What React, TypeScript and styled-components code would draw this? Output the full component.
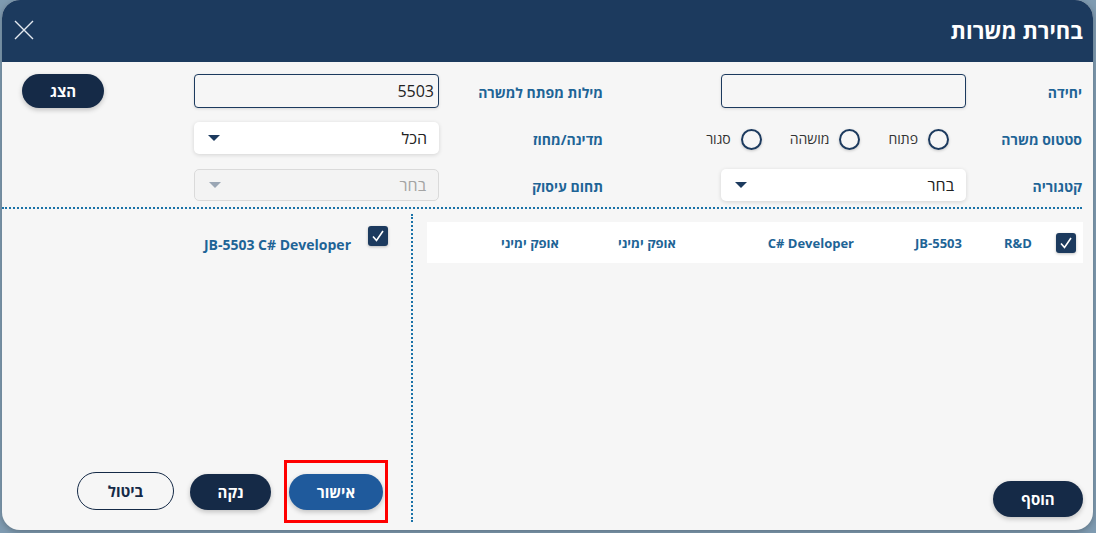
import React, { useState } from 'react'
import styled, { createGlobalStyle } from 'styled-components'

const GlobalStyle = createGlobalStyle`
  html, body {
    margin: 0;
    padding: 0;
    background: #7f9bb1;
    font-family: 'Open Sans', 'Liberation Sans', 'DejaVu Sans', sans-serif;
  }
  * {
    box-sizing: border-box;
  }
`

const Page = styled.div`
  width: 1096px;
  height: 533px;
  padding: 0 3px 3px 2px;
`

const Dialog = styled.div`
  direction: rtl;
  height: 530px;
  background: #f6f6f6;
  border-radius: 18px;
  overflow: hidden;
  display: flex;
  flex-direction: column;
  box-shadow: 0 2px 6px rgba(0, 0, 0, 0.25);
`

const Header = styled.div`
  height: 62px;
  flex-shrink: 0;
  background: #1c3a5e;
  display: flex;
  align-items: center;
  justify-content: space-between;
  padding: 0 10px 2px 10px;
`

const Title = styled.h1`
  margin: 0;
  color: #ffffff;
  font-size: 22px;
  font-weight: 700;
`

const CloseButton = styled.button`
  border: none;
  background: transparent;
  padding: 0;
  width: 24px;
  height: 24px;
  cursor: pointer;
  display: flex;
  align-items: center;
  justify-content: center;
`

const FilterGrid = styled.div`
  display: grid;
  grid-template-columns: 116px 245px 118px 164px 245px 90px 82px;
  grid-auto-rows: 34px;
  row-gap: 13px;
  align-items: center;
  padding: 12px 0 5px 20px;
  margin-right: 11px;
  border-bottom: 2px dotted #1a72a8;
`

const Label = styled.label`
  color: #1e6496;
  font-size: 14px;
  font-weight: 700;
  white-space: nowrap;
  padding-top: 2px;
`

const TextInput = styled.input`
  width: 100%;
  height: 34px;
  border: 1px solid #1c3a5e;
  border-radius: 4px;
  background: #f6f6f6;
  font-family: inherit;
  font-size: 16px;
  color: #222;
  padding: 0 4px;
  direction: rtl;
  outline: none;
  box-shadow: 0 1px 3px rgba(0, 0, 0, 0.12);
`

const SelectBox = styled.div<{ disabled?: boolean }>`
  height: 32px;
  border-radius: 5px;
  background: ${({ disabled }) => (disabled ? '#f3f3f3' : '#ffffff')};
  border: ${({ disabled }) => (disabled ? '1px solid #dadada' : 'none')};
  box-shadow: ${({ disabled }) =>
    disabled ? 'none' : '0 1px 4px rgba(0, 0, 0, 0.14)'};
  display: flex;
  align-items: center;
  justify-content: space-between;
  padding: 0 12px 0 14px;
  font-size: 16px;
  color: ${({ disabled }) => (disabled ? '#a4a4a4' : '#222')};
`

const Arrow = styled.span<{ disabled?: boolean }>`
  width: 0;
  height: 0;
  border-left: 6px solid transparent;
  border-right: 6px solid transparent;
  border-top: 6px solid ${({ disabled }) => (disabled ? '#9aa6b4' : '#1c3a5e')};
`

const RadioGroup = styled.div`
  grid-column: span 2;
  display: flex;
  align-items: center;
  gap: 28px;
  padding-right: 17px;
`

const RadioItem = styled.label`
  display: flex;
  align-items: center;
  gap: 10px;
  font-size: 14px;
  color: #333;
  cursor: pointer;
`

const RadioCircle = styled.span`
  width: 21px;
  height: 21px;
  border-radius: 50%;
  border: 2px solid #1c3a5e;
  box-shadow: 0 1px 3px rgba(0, 0, 0, 0.2);
  margin-top: 3px;
`

const PillButton = styled.button<{ variant?: 'dark' | 'blue' | 'outline' }>`
  height: 36px;
  border-radius: 20px;
  font-family: inherit;
  font-size: 15px;
  font-weight: 700;
  cursor: pointer;
  background: ${({ variant }) =>
    variant === 'blue'
      ? '#1f5a9c'
      : variant === 'outline'
        ? 'transparent'
        : '#152a47'};
  color: ${({ variant }) => (variant === 'outline' ? '#152a47' : '#ffffff')};
  border: ${({ variant }) =>
    variant === 'outline' ? '1px solid #152a47' : 'none'};
  box-shadow: ${({ variant }) =>
    variant === 'outline' ? 'none' : '0 2px 5px rgba(0, 0, 0, 0.22)'};
`

const ShowButton = styled(PillButton)`
  height: 34px;
  width: 82px;
`

const Lower = styled.div`
  flex: 1;
  display: flex;
  min-height: 0;
`

const ResultsPanel = styled.div`
  width: 680px;
  display: flex;
  flex-direction: column;
  padding: 13px 10px 13px 14px;
`

const ResultRow = styled.div`
  height: 41px;
  background: #ffffff;
  display: flex;
  align-items: center;
  padding-right: 7px;
`

const Cell = styled.span<{ width: number }>`
  width: ${({ width }) => width}px;
  flex-shrink: 0;
  color: #1e6496;
  font-size: 13px;
  font-weight: 700;
  white-space: nowrap;
`

const CheckBox = styled.span`
  width: 20px;
  height: 20px;
  border-radius: 3px;
  background: #1c3a5e;
  flex-shrink: 0;
  display: flex;
  align-items: center;
  justify-content: center;
  box-shadow: 0 1px 3px rgba(0, 0, 0, 0.25);
`

const Spacer = styled.div`
  flex: 1;
`

const AddButton = styled(PillButton)`
  width: 90px;
  align-self: flex-start;
`

const Divider = styled.div`
  margin: 5px 0 8px;
  border-right: 2px dotted #1a72a8;
`

const SelectedPanel = styled.div`
  flex: 1;
  display: flex;
  flex-direction: column;
  padding: 17px 23px 7px 0;
`

const SelectedItem = styled.div`
  display: flex;
  align-items: flex-start;
  gap: 17px;
`

const SelectedText = styled.span`
  margin-top: 9px;
  direction: ltr;
  color: #1e6496;
  font-size: 14px;
  font-weight: 700;
`

const Actions = styled.div`
  display: flex;
  align-items: center;
  gap: 13px;
`

const Highlight = styled.div`
  border: 3px solid #ff0000;
  padding: 11px 2px 10px 2px;
`

const OkButton = styled(PillButton)`
  width: 94px;
`

const ClearButton = styled(PillButton)`
  width: 81px;
  margin-left: 3px;
`

const CancelButton = styled(PillButton)`
  width: 97px;
  height: 38px;
  margin-bottom: 2px;
`

const Check = () => (
  <svg width="14" height="14" viewBox="0 0 14 14">
    <polyline
      points="2,7.5 5.5,11.5 12,2"
      fill="none"
      stroke="#ffffff"
      strokeWidth="1.6"
    />
  </svg>
)

const columns = [
  { text: 'R&D', width: 70 },
  { text: 'JB-5503', width: 108 },
  { text: 'C# Developer', width: 178 },
  { text: 'אופק ימיני', width: 117 },
  { text: 'אופק ימיני', width: 100 },
]

export default function App() {
  const [keyword, setKeyword] = useState('5503')
  const [unit, setUnit] = useState('')

  return (
    <Page>
      <GlobalStyle />
      <Dialog>
        <Header>
          <Title>בחירת משרות</Title>
          <CloseButton aria-label="close">
            <svg width="22" height="22" viewBox="0 0 22 22">
              <path
                d="M2 2 L20 20 M20 2 L2 20"
                stroke="#e4e9f0"
                strokeWidth="1.4"
              />
            </svg>
          </CloseButton>
        </Header>

        <FilterGrid>
          <Label>יחידה</Label>
          <TextInput value={unit} onChange={(e) => setUnit(e.target.value)} />
          <span />
          <Label>מילות מפתח למשרה</Label>
          <TextInput
            value={keyword}
            onChange={(e) => setKeyword(e.target.value)}
          />
          <span />
          <ShowButton>הצג</ShowButton>

          <Label>סטטוס משרה</Label>
          <RadioGroup>
            <RadioItem>
              <RadioCircle />
              פתוח
            </RadioItem>
            <RadioItem>
              <RadioCircle />
              מושהה
            </RadioItem>
            <RadioItem>
              <RadioCircle />
              סגור
            </RadioItem>
          </RadioGroup>
          <Label>מדינה/מחוז</Label>
          <SelectBox>
            הכל
            <Arrow />
          </SelectBox>
          <span />
          <span />

          <Label>קטגוריה</Label>
          <SelectBox>
            בחר
            <Arrow />
          </SelectBox>
          <span />
          <Label>תחום עיסוק</Label>
          <SelectBox disabled>
            בחר
            <Arrow disabled />
          </SelectBox>
        </FilterGrid>

        <Lower>
          <ResultsPanel>
            <ResultRow>
              <CheckBox>
                <Check />
              </CheckBox>
              <Cell width={24} />
              {columns.map((c, i) => (
                <Cell key={i} width={c.width}>
                  {c.text}
                </Cell>
              ))}
            </ResultRow>
            <Spacer />
            <AddButton>הוסף</AddButton>
          </ResultsPanel>
          <Divider />
          <SelectedPanel>
            <SelectedItem>
              <CheckBox>
                <Check />
              </CheckBox>
              <SelectedText>JB-5503 C# Developer</SelectedText>
            </SelectedItem>
            <Spacer />
            <Actions>
              <Highlight>
                <OkButton variant="blue">אישור</OkButton>
              </Highlight>
              <ClearButton>נקה</ClearButton>
              <CancelButton variant="outline">ביטול</CancelButton>
            </Actions>
          </SelectedPanel>
        </Lower>
      </Dialog>
    </Page>
  )
}
